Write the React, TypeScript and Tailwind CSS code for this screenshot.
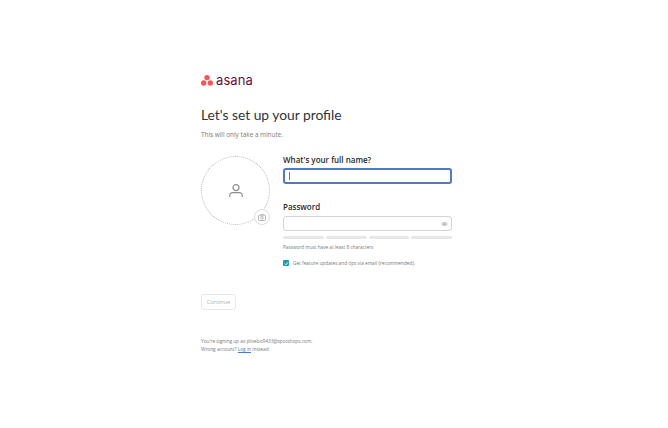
import React from "react";

export default function App() {
  return (
    <div className="w-[668px] h-[428px] bg-white overflow-hidden font-['Open_Sans',sans-serif]">
      <div className="w-[251px] ml-[201px] pt-[73px] flex flex-col">
        <div className="flex items-center gap-[3px] h-[14px]">
          <svg width="12" height="12" viewBox="0 0 12 12">
            <circle cx="6" cy="3.6" r="2.7" fill="#f4565a" />
            <circle cx="2.7" cy="9" r="2.7" fill="#f4565a" />
            <circle cx="9.3" cy="9" r="2.7" fill="#f4565a" />
          </svg>
          <span className="text-[13px] leading-[14px] font-['Inter',sans-serif] font-normal text-[#690f3f] tracking-[0.1px]">asana</span>
        </div>
        <h1 className="mt-[19px] text-[13.8px] leading-[18px] font-normal font-['Lato',sans-serif] text-[#2e3338]">Let's set up your profile</h1>
        <p className="mt-[6px] text-[6.4px] leading-[10px] text-[#777a7d]">This will only take a minute.</p>
        <div className="mt-[16px] flex gap-[13px]">
          <div className="relative w-[69px] h-[69px] shrink-0 rounded-full border border-dotted border-[#b0b3b5] flex items-center justify-center">
            <svg width="16" height="16" viewBox="0 0 16 16" fill="none" stroke="#8d9092" strokeWidth="1.2">
              <circle cx="8" cy="4.6" r="3" />
              <path d="M1.8 14v-1.400c0-1.800 1.400-3 3.200-3h6c1.800 0 3.200 1.200 3.200 3V14" />
            </svg>
            <div className="absolute left-[52px] top-[52px] w-[16px] h-[16px] rounded-full bg-white border border-[#dcdedf] flex items-center justify-center">
              <svg width="8" height="7" viewBox="0 0 8 7" fill="none" stroke="#9a9c9e" strokeWidth="0.7">
                <rect x="0.5" y="1.2" width="7" height="5.3" rx="0.8" />
                <circle cx="4" cy="3.8" r="1.3" />
                <path d="M2.500 1.200l.5-.8h2l.5.8" />
              </svg>
            </div>
          </div>
          <div className="flex-1 flex flex-col">
            <label className="text-[8px] leading-[11px] font-semibold text-[#2a2b2d] -mt-[2px]">What's your full name?</label>
            <div className="mt-[3px] h-[16px] rounded-[3px] border-2 border-[#5478c0] flex items-center pl-[4px]">
              <div className="w-px h-[8px] bg-[#777]" />
            </div>
            <label className="mt-[17px] text-[8px] leading-[11px] font-semibold text-[#2a2b2d]">Password</label>
            <div className="mt-[4px] h-[15px] rounded-[3px] border border-[#d5d3d3] flex items-center justify-end pr-[3px]">
              <svg width="7" height="6" viewBox="0 0 8 6" fill="none" stroke="#a5a7a9" strokeWidth="0.8">
                <path d="M.5 3C2 .8 6 .8 7.500 3 6 5.200 2 5.200 .5 3z" />
                <circle cx="4" cy="3" r="1" fill="#a5a7a9" />
              </svg>
            </div>
            <div className="mt-[5px] flex gap-[2px]">
              <div className="flex-1 h-[3px] rounded-full bg-[#e8e8e9]" />
              <div className="flex-1 h-[3px] rounded-full bg-[#e8e8e9]" />
              <div className="flex-1 h-[3px] rounded-full bg-[#e8e8e9]" />
              <div className="flex-1 h-[3px] rounded-full bg-[#e8e8e9]" />
            </div>
            <p className="mt-[4px] text-[4.7px] leading-[8px] text-[#77797b]">Password must have at least 8 characters</p>
            <div className="mt-[8px] flex items-center gap-[4px]">
              <div className="w-[6px] h-[6px] rounded-[1px] bg-[#13a0b0] flex items-center justify-center">
                <svg width="5" height="5" viewBox="0 0 6 6" fill="none" stroke="#fff" strokeWidth="1.1">
                  <path d="M1 3l1.500 1.500L5 1.500" />
                </svg>
              </div>
              <span className="text-[4.75px] leading-[8px] text-[#77797b]">Get feature updates and tips via email (recommended).</span>
            </div>
          </div>
        </div>
        <div className="mt-[27px] w-[35px] h-[16px] rounded-[3px] border border-[#e8e8e9] flex items-center justify-center text-[5.6px] text-[#b0b2b4]">Continue</div>
        <p className="mt-[27px] text-[4.75px] leading-[8px] text-[#77797b]">
          You're signing up as plivebo9433@spotshops.com.
          <br />
          Wrong account? <span className="text-[#4a7cc7] underline">Log in</span> instead.
        </p>
      </div>
    </div>
  );
}
